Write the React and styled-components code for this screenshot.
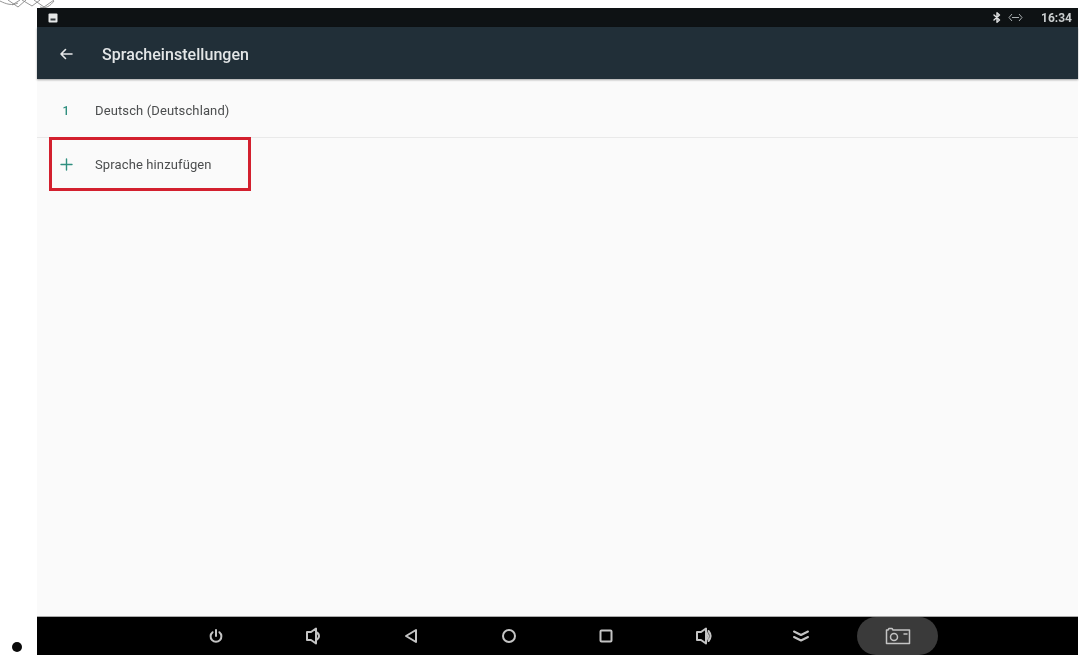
import React from "react";
import styled, { createGlobalStyle } from "styled-components";

const Global = createGlobalStyle`
  html, body { margin: 0; padding: 0; background: #fff; overflow: hidden; }
  body { font-family: Roboto, "Liberation Sans", sans-serif; }
`;

const Page = styled.div`
  position: relative;
  width: 1079px;
  height: 659px;
  padding: 8px 1px 4px 0;
  box-sizing: border-box;
  display: flex;
  background: #fff;
  overflow: hidden;
`;

const Gutter = styled.div`
  width: 37px;
  flex: none;
  display: flex;
  align-items: flex-end;
  justify-content: center;
  padding: 0 4px 3px 0;
  box-sizing: border-box;
`;

const Bullet = styled.span`
  width: 10px;
  height: 10px;
  border-radius: 50%;
  background: #0a0a0a;
`;

const Doodle = styled.svg`
  position: absolute;
  left: 0;
  top: 0;
`;

const Screen = styled.div`
  flex: 1;
  min-width: 0;
  display: flex;
  flex-direction: column;
  background: #fafafa;
  filter: blur(0.5px);
`;

const StatusBar = styled.div`
  height: 19px;
  flex: none;
  display: flex;
  align-items: center;
  background: #0e1214;
  color: #d5d8d9;
  padding: 0 6px 0 11px;
`;

const StatusRight = styled.div`
  margin-left: auto;
  display: flex;
  align-items: center;
`;

const Clock = styled.span`
  font-size: 12px;
  font-weight: 700;
  margin-left: 18px;
  color: #c9cdce;
`;

const Toolbar = styled.header`
  height: 52px;
  flex: none;
  display: flex;
  align-items: center;
  background: #212f38;
  box-shadow: 0 1px 2px rgba(0, 0, 0, 0.35);
  padding: 2px 0 0 22px;
  box-sizing: border-box;
  position: relative;
  z-index: 1;
`;

const Title = styled.h1`
  margin: 2px 0 0 29px;
  font-size: 16px;
  line-height: 20px;
  font-weight: 500;
  letter-spacing: 0.05px;
  color: #e3e6e7;
`;

const Content = styled.main`
  flex: 1;
  min-height: 0;
  display: flex;
  flex-direction: column;
`;

const Row = styled.div`
  position: relative;
  height: ${(p) => p.$h}px;
  flex: none;
  display: flex;
  align-items: center;
  padding: ${(p) => p.$pad || "0"};
  box-sizing: border-box;
  border-bottom: ${(p) => (p.$divider ? "1px solid #e9e9e9" : "none")};
`;

const Leading = styled.span`
  width: 58px;
  flex: none;
  display: flex;
  justify-content: center;
  color: #2f8f7f;
  font-size: 12px;
  font-weight: 500;
`;

const Label = styled.span`
  font-size: 13px;
  letter-spacing: 0.12px;
  color: #4b4d4e;
`;

const Highlight = styled.div`
  position: absolute;
  left: 12px;
  top: -1px;
  width: 202px;
  height: 54px;
  box-sizing: border-box;
  border: 3px solid #d3202e;
`;

const NavBar = styled.nav`
  height: 38px;
  flex: none;
  margin-top: 1px;
  display: flex;
  align-items: stretch;
  background: #000;
  padding-left: 130px;
  border-top: 1px solid #aaa;
  box-sizing: content-box;
`;

const NavButton = styled.div`
  width: ${(p) => p.$w || 97.6}px;
  flex: none;
  display: flex;
  align-items: center;
  justify-content: center;
  background: ${(p) => (p.$active ? "#3a3a3a" : "transparent")};
  border-radius: ${(p) => (p.$active ? "19px" : "0")};
  margin-left: ${(p) => p.$ml || 0}px;
`;

const Ico = ({ w = 18, h = 18, vb, sw = 2, stroke = "#c4c4c4", children }) => (
  <svg width={w} height={h} viewBox={vb || `0 0 ${w} ${h}`} fill="none" stroke={stroke} strokeWidth={sw} strokeLinecap="round" strokeLinejoin="round">
    {children}
  </svg>
);

export default function App() {
  return (
    <>
      <Global />
      <Page>
        <Doodle width="60" height="12" viewBox="0 0 60 12" fill="none" stroke="#8a8a8a" strokeWidth="0.9">
          <path d="M0 1 C6 4 12 6 18 3 M8 0 L18 7 L26 0 M22 0 L32 6 L40 0 M34 0 L44 7 L54 0 M40 7 C46 9 50 6 54 1 M12 5 L20 0" />
        </Doodle>
        <Gutter>
          <Bullet />
        </Gutter>
        <Screen>
          <StatusBar>
            <svg width="10" height="10" viewBox="0 0 10 10">
              <rect x="0.5" y="0.5" width="9" height="9" rx="1" fill="#e6e8e8" />
              <rect x="2.5" y="5.5" width="5" height="2" fill="#33393c" />
            </svg>
            <StatusRight>
              <Ico w={8} h={11} sw={1.4} stroke="#e0e2e3">
                <path d="M1 3 L6.5 8 L4 10.2 V0.8 L6.5 3 L1 8" />
              </Ico>
              <svg width="15" height="9" viewBox="0 0 15 9" fill="none" stroke="#aab0b2" strokeWidth="1" style={{ marginLeft: 7 }}>
                <path d="M4 1 L1 4.5 L4 8 M11 1 L14 4.5 L11 8 M4 4.5 H11" />
              </svg>
              <Clock>16:34</Clock>
            </StatusRight>
          </StatusBar>
          <Toolbar>
            <Ico w={14} h={14} sw={1.6} stroke="#e6e8e9">
              <path d="M13 7 H2 M6.5 2.5 L2 7 L6.5 11.5" />
            </Ico>
            <Title>Spracheinstellungen</Title>
          </Toolbar>
          <Content>
            <Row $h={59} $divider $pad="5px 0 0">
              <Leading>1</Leading>
              <Label>Deutsch (Deutschland)</Label>
            </Row>
            <Row $h={52}>
              <Leading>
                <Ico w={13} h={13} sw={1.4} stroke="#2f8f7f">
                  <path d="M6.5 1 V12 M1 6.5 H12" />
                </Ico>
              </Leading>
              <Label>Sprache hinzufügen</Label>
              <Highlight />
            </Row>
          </Content>
          <NavBar>
            <NavButton>
              <Ico w={16} h={16}>
                <path d="M8 2 V8 M4.6 4.2 A5.4 5.4 0 1 0 11.4 4.2" />
              </Ico>
            </NavButton>
            <NavButton>
              <Ico w={18} h={20}>
                <path d="M3 6 H7 L12 2.5 V17.5 L7 14 H3 Z M12 6 C16 8 16 12 12 14" />
              </Ico>
            </NavButton>
            <NavButton>
              <Ico w={14} h={16}>
                <path d="M12 2 V14 L2 8 Z" />
              </Ico>
            </NavButton>
            <NavButton>
              <Ico w={16} h={16}>
                <circle cx="8" cy="8" r="6" />
              </Ico>
            </NavButton>
            <NavButton>
              <Ico w={16} h={16}>
                <rect x="2.5" y="2.5" width="11" height="11" rx="1" />
              </Ico>
            </NavButton>
            <NavButton>
              <Ico w={20} h={20}>
                <path d="M3 6 H7 L12 2.5 V17.5 L7 14 H3 Z M12 6 C15 8 15 12 12 14 M14.5 5 C17 8 17 12 14.5 15" />
              </Ico>
            </NavButton>
            <NavButton>
              <Ico w={18} h={14}>
                <path d="M2 2.5 L9 6 L16 2.5 M2 8 L9 11.5 L16 8" />
              </Ico>
            </NavButton>
            <NavButton $active $w={81} $ml={7}>
              <Ico w={26} h={18} sw={1.5}>
                <path d="M1.5 3 H3 L4 1.5 H7 L8 3 H24.5 V16.5 H1.5 Z" />
                <circle cx="9" cy="10" r="3.5" />
                <path d="M19 7 H22" />
              </Ico>
            </NavButton>
          </NavBar>
        </Screen>
      </Page>
    </>
  );
}
